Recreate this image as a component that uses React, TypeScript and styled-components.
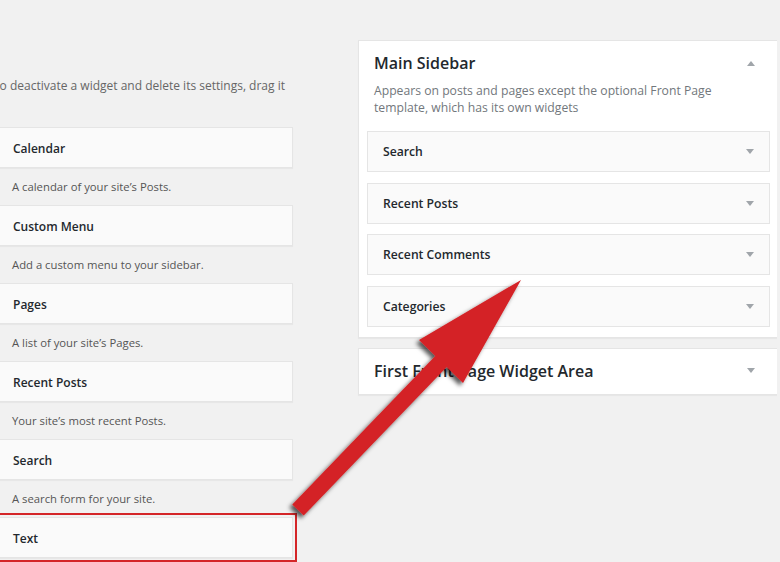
import styled, { createGlobalStyle } from 'styled-components';

const GlobalStyle = createGlobalStyle`
	html, body {
		margin: 0;
		padding: 0;
		background: #f1f1f1;
		overflow: hidden;
	}
	body {
		font-family: 'Open Sans', 'Noto Sans', sans-serif;
		color: #23282d;
	}
`;

const Page = styled.div`
	position: relative;
	width: 780px;
	height: 562px;
	overflow: hidden;
	display: grid;
	grid-template-columns: 296px 421px;
	column-gap: 65px;
	margin-left: -3px;
`;

const LeftColumn = styled.div`
	padding-top: 77px;
`;

const Intro = styled.p`
	margin: 0 0 32px -4px;
	font-size: 12px;
	line-height: 18px;
	color: #666;
	white-space: nowrap;
`;

const WidgetBox = styled.div<{ $selected?: boolean }>`
	box-sizing: border-box;
	height: 41px;
	display: flex;
	align-items: center;
	padding: 1px 15px 0;
	background: #fafafa;
	border: 1px solid #e5e5e5;
	box-shadow: 0 1px 1px rgba(0, 0, 0, 0.04);
	font-size: 12px;
	font-weight: 600;
	color: #23282d;
	outline: ${(p) => (p.$selected ? '2px solid #d42528' : 'none')};
	outline-offset: 2px;
`;

const WidgetDesc = styled.div`
	padding: 10px 15px 9px;
	font-size: 11.3px;
	line-height: 18px;
	color: #555;
`;

const RightColumn = styled.div`
	padding-top: 40px;
	display: flex;
	flex-direction: column;
	gap: 10px;
`;

const Panel = styled.div<{ $closed?: boolean }>`
	box-sizing: border-box;
	background: #fff;
	border: 1px solid #e5e5e5;
	box-shadow: 0 1px 1px rgba(0, 0, 0, 0.04);
	padding: 0 8px ${(p) => (p.$closed ? '12px' : '10px')};
`;

const PanelHead = styled.div`
	display: flex;
	align-items: center;
	justify-content: space-between;
	padding: 11px 15px 0 7px;
`;

const PanelTitle = styled.h2`
	margin: 0;
	font-size: 16px;
	font-weight: 600;
	line-height: 22px;
	color: #23282d;
`;

const PanelDesc = styled.p`
	margin: 8px 7px 15px;
	font-size: 12.2px;
	line-height: 17px;
	color: #72777c;
`;

const SideList = styled.div`
	display: flex;
	flex-direction: column;
	gap: 10.6px;
`;

const SideWidget = styled.div`
	box-sizing: border-box;
	height: 41px;
	display: flex;
	align-items: center;
	justify-content: space-between;
	padding: 0 15px;
	background: #fafafa;
	border: 1px solid #e5e5e5;
	font-size: 12.2px;
	font-weight: 600;
	color: #23282d;
`;

const Caret = styled.span<{ $up?: boolean }>`
	width: 0;
	height: 0;
	border-left: 4px solid transparent;
	border-right: 4px solid transparent;
	${(p) =>
		p.$up ? 'border-bottom: 5px solid #a0a5aa;' : 'border-top: 5px solid #a0a5aa;'}
`;

const ArrowOverlay = styled.svg`
	position: absolute;
	left: 3px;
	top: 0;
	width: 780px;
	height: 562px;
	pointer-events: none;
`;

const available = [
	{ title: 'Calendar', desc: 'A calendar of your site’s Posts.' },
	{ title: 'Custom Menu', desc: 'Add a custom menu to your sidebar.' },
	{ title: 'Pages', desc: 'A list of your site’s Pages.' },
	{ title: 'Recent Posts', desc: 'Your site’s most recent Posts.' },
	{ title: 'Search', desc: 'A search form for your site.' },
];

const sidebarWidgets = ['Search', 'Recent Posts', 'Recent Comments', 'Categories'];

function App() {
	return (
		<>
			<GlobalStyle />
			<Page>
				<LeftColumn>
					<Intro>To deactivate a widget and delete its settings, drag it</Intro>
					{available.map((w) => (
						<div key={w.title}>
							<WidgetBox>{w.title}</WidgetBox>
							<WidgetDesc>{w.desc}</WidgetDesc>
						</div>
					))}
					<WidgetBox $selected>Text</WidgetBox>
				</LeftColumn>

				<RightColumn>
					<Panel>
						<PanelHead>
							<PanelTitle>Main Sidebar</PanelTitle>
							<Caret $up />
						</PanelHead>
						<PanelDesc>
							Appears on posts and pages except the optional Front Page template, which has its own
							widgets
						</PanelDesc>
						<SideList>
							{sidebarWidgets.map((name) => (
								<SideWidget key={name}>
									{name}
									<Caret />
								</SideWidget>
							))}
						</SideList>
					</Panel>
					<Panel $closed>
						<PanelHead>
							<PanelTitle>First Front Page Widget Area</PanelTitle>
							<Caret />
						</PanelHead>
					</Panel>
				</RightColumn>

				<ArrowOverlay viewBox="0 0 780 562">
					<defs>
						<filter id="arrowShadow" x="-20%" y="-20%" width="140%" height="140%">
							<feDropShadow dx="-3" dy="3" stdDeviation="2" floodColor="#000" floodOpacity="0.65" />
						</filter>
					</defs>
					<polygon
						points="292.3,504.4 435.3,356 419,340 521,280 463,383 446.7,367.1 303.7,515.6"
						fill="#d42226"
						filter="url(#arrowShadow)"
					/>
				</ArrowOverlay>
			</Page>
		</>
	);
}

export default App;
